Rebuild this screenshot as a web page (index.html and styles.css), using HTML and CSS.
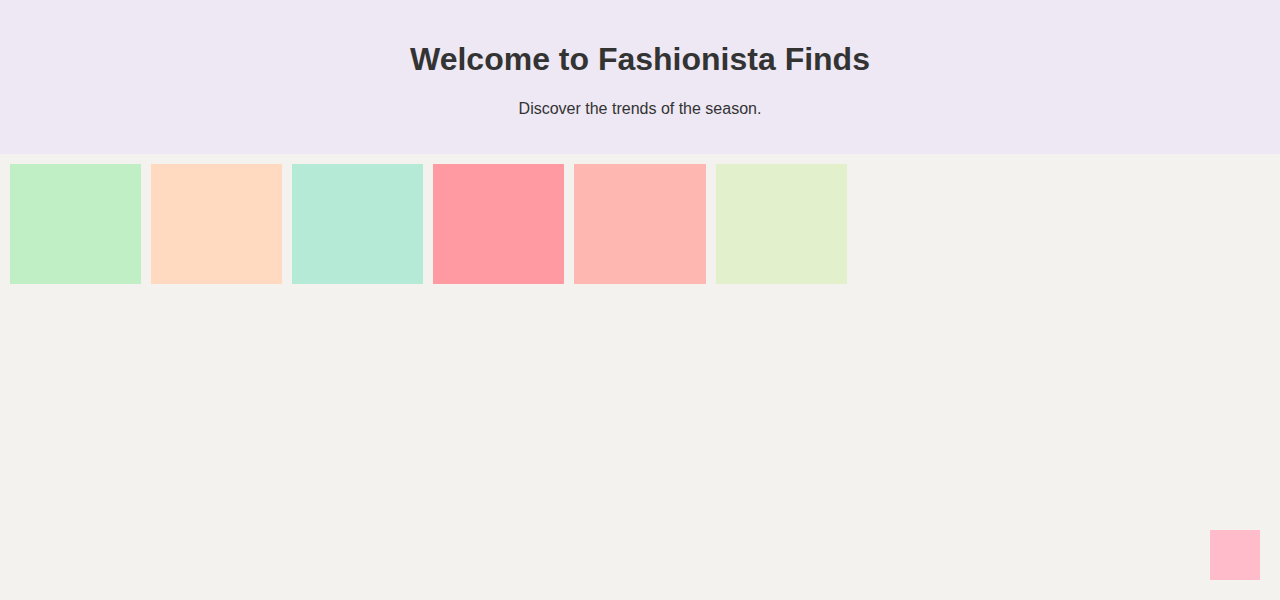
FILE: index.html
```html
<!DOCTYPE html>
<html lang="en">
<head>
<meta charset="utf-8">
<title>Fashionista Finds</title>
<link rel="stylesheet" href="styles.css">
</head>
<body>
<header class="hero">
  <h1 class="hero-title">Welcome to Fashionista Finds</h1>
  <p class="hero-sub">Discover the trends of the season.</p>
</header>
<main class="gallery">
  <div class="tile tile-green"></div>
  <div class="tile tile-peach"></div>
  <div class="tile tile-mint"></div>
  <div class="tile tile-rose"></div>
  <div class="tile tile-salmon"></div>
  <div class="tile tile-lime"></div>
</main>
<div class="float-btn"></div>
</body>
</html>
```
FILE: styles.css
```css
html, body {
  margin: 0;
  padding: 0;
}
body {
  background: #f3f2ee;
  font-family: "Liberation Sans", Arial, sans-serif;
  color: #333;
  min-height: 100vh;
}
.hero {
  background: #ede8f3;
  text-align: center;
  padding: 20px;
}
.hero-title {
  font-size: 32px;
  font-weight: bold;
  margin: 21.44px 0;
}
.hero-sub {
  font-size: 16px;
  margin: 16px 0;
}
.gallery {
  display: flex;
  flex-wrap: wrap;
  padding: 5px;
}
.tile {
  width: 131.11px;
  height: 120px;
  margin: 5px;
}
.tile-green { background: #c1efc5; }
.tile-peach { background: #ffdac1; }
.tile-mint { background: #b5ead7; }
.tile-rose { background: #ff9aa2; }
.tile-salmon { background: #ffb7b2; }
.tile-lime { background: #e2f0cb; }
.float-btn {
  position: fixed;
  right: 20px;
  bottom: 20px;
  width: 50px;
  height: 50px;
  background: #ffbbc9;
}
```
